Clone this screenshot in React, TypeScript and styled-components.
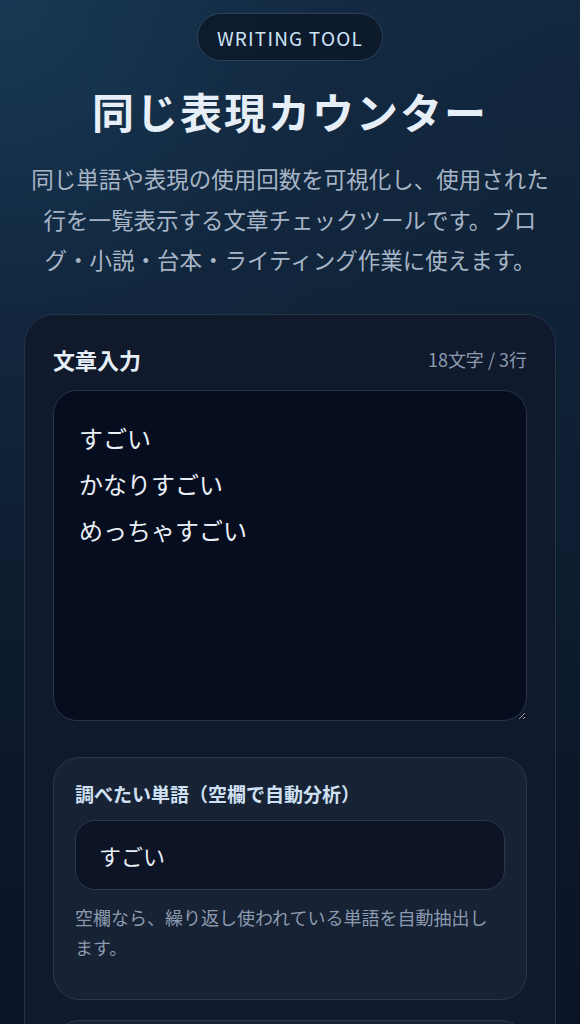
import React, { useState } from "react";
import styled, { createGlobalStyle } from "styled-components";

const GlobalStyle = createGlobalStyle`
  html, body {
    margin: 0;
    padding: 0;
    background: #0b1426;
  }
  body {
    font-family: "Noto Sans CJK JP", "Noto Sans", sans-serif;
    color: #e6eef7;
  }
  * { box-sizing: border-box; }
`;

const Page = styled.main`
  min-height: 1024px;
  padding: 13px 24px 40px;
  display: flex;
  flex-direction: column;
  align-items: center;
  background:
    radial-gradient(ellipse 120% 60% at 0% 0%, rgba(26, 62, 92, 0.75) 0%, rgba(20, 46, 72, 0.35) 45%, rgba(11, 20, 38, 0) 80%),
    linear-gradient(180deg, #12283f 0%, #0f2034 35%, #0c1628 70%, #0b1324 100%);
`;

const Badge = styled.div`
  height: 48px;
  padding: 0 19px;
  display: inline-flex;
  align-items: center;
  border-radius: 999px;
  border: 1px solid #2b4158;
  background: rgba(12, 22, 38, 0.75);
  color: #cde5f6;
  font-size: 19px;
  letter-spacing: 1.2px;
  line-height: 1;
`;

const Title = styled.h1`
  margin: 22px 0 0;
  font-size: 42px;
  line-height: 55px;
  font-weight: 700;
  color: #e6eef7;
  letter-spacing: 2px;
  text-align: center;
`;

const Lead = styled.p`
  margin: 20px 0 0;
  font-size: 22.5px;
  line-height: 40.5px;
  color: #a7b5c6;
  text-align: center;
`;

const Card = styled.section`
  margin-top: 34px;
  width: 100%;
  border-radius: 30px;
  border: 1px solid #26344a;
  background: #101a2c;
  padding: 28px 28px 40px;
  display: flex;
  flex-direction: column;
`;

const CardHeader = styled.div`
  display: flex;
  align-items: center;
  justify-content: space-between;
  height: 32px;
`;

const CardTitle = styled.h2`
  margin: 0;
  font-size: 22px;
  font-weight: 700;
  color: #e6eef7;
`;

const Counter = styled.span`
  font-size: 18px;
  color: #8b9bb0;
`;

const TextArea = styled.textarea`
  margin-top: 15px;
  width: 100%;
  height: 331px;
  resize: vertical;
  border-radius: 24px;
  border: 1px solid #27344a;
  background: #060d1e;
  color: #e9eff6;
  font-family: "Noto Sans CJK JP", "Noto Sans", sans-serif;
  font-size: 24px;
  line-height: 46px;
  padding: 24px 25px;
  outline: none;
`;

const Panel = styled.div<{ $gap: number; $minHeight?: number }>`
  margin-top: ${(p) => p.$gap}px;
  border-radius: 26px;
  border: 1px solid #2a374c;
  background: #172235;
  padding: 22px 21px 37px;
  display: flex;
  flex-direction: column;
  min-height: ${(p) => (p.$minHeight ? `${p.$minHeight}px` : "auto")};
`;

const Label = styled.label`
  font-size: 19px;
  font-weight: 700;
  line-height: 27px;
  color: #cfe0f2;
`;

const Input = styled.input`
  margin-top: 13px;
  width: 100%;
  height: 70px;
  border-radius: 20px;
  border: 1px solid #2b384c;
  background: #0c1426;
  color: #e9eff6;
  font-family: "Noto Sans CJK JP", "Noto Sans", sans-serif;
  font-size: 22px;
  padding: 0 23px;
  outline: none;
`;

const Help = styled.p`
  margin: 12px 0 0;
  font-size: 18px;
  line-height: 30px;
  color: #8b9aae;
`;

export default function App() {
  const [text, setText] = useState("すごい\nかなりすごい\nめっちゃすごい");
  const [word, setWord] = useState("すごい");
  const lines = text.split("\n").length;
  const chars = text.length;

  return (
    <>
      <GlobalStyle />
      <Page>
        <Badge>WRITING TOOL</Badge>
        <Title>同じ表現カウンター</Title>
        <Lead>
          同じ単語や表現の使用回数を可視化し、使用された
          <br />
          行を一覧表示する文章チェックツールです。ブロ
          <br />
          グ・小説・台本・ライティング作業に使えます。
        </Lead>
        <Card>
          <CardHeader>
            <CardTitle>文章入力</CardTitle>
            <Counter>
              {chars}文字 / {lines}行
            </Counter>
          </CardHeader>
          <TextArea value={text} onChange={(e) => setText(e.target.value)} />
          <Panel $gap={36}>
            <Label htmlFor="word">調べたい単語（空欄で自動分析）</Label>
            <Input id="word" value={word} onChange={(e) => setWord(e.target.value)} />
            <Help>空欄なら、繰り返し使われている単語を自動抽出します。</Help>
          </Panel>
          <Panel $gap={20} $minHeight={120} />
        </Card>
      </Page>
    </>
  );
}
